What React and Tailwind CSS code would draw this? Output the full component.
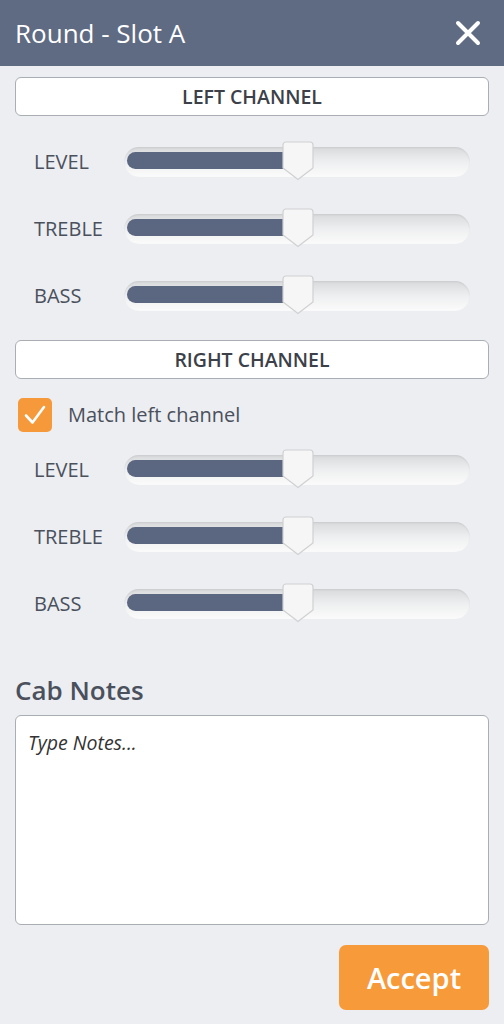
import React, { useState } from "react";

const LEFT = [
  { label: "LEVEL", value: 50 },
  { label: "TREBLE", value: 50 },
  { label: "BASS", value: 50 },
];

const Slider = ({ value }) => {
  // thumb center sits at ~173px of a 346px track when value is 50
  const pos = (value / 100) * 346;
  return (
    <div className="relative h-[30px] flex-1 rounded-full bg-gradient-to-b from-[#d9dadc] via-[#eeeff0] to-[#fbfbfb] shadow-[inset_0_1px_2px_rgba(0,0,0,0.08)]">
      <div
        className="absolute left-[3px] top-[5px] h-[17px] rounded-l-full bg-[#5b6680]"
        style={{ width: pos - 3 }}
      />
      <svg
        className="absolute top-[-6px]"
        style={{ left: pos - 15 }}
        width="32"
        height="40"
        viewBox="0 0 32 40"
      >
        <path
          d="M4 1 H28 A3 3 0 0 1 31 4 V27 L16 38.5 L1 27 V4 A3 3 0 0 1 4 1 Z"
          fill="#f6f6f6"
          stroke="#cfd0d2"
          strokeWidth="1.2"
        />
      </svg>
    </div>
  );
};

const SliderRow = ({ label, value }) => (
  <div className="flex h-[67px] items-center">
    <div className="w-[109px] pl-[19px] text-[20px] text-[#4a505c]">{label}</div>
    <div className="mr-[19px] flex flex-1">
      <Slider value={value} />
    </div>
  </div>
);

const ChannelBox = ({ children }) => (
  <div className="flex h-[39px] items-center justify-center rounded-[6px] border border-[#a9adb4] bg-white text-[19.5px] font-semibold text-[#3b4049]">
    {children}
  </div>
);

export default function App() {
  const [match, setMatch] = useState(true);

  return (
    <div className="min-h-screen w-full bg-[#eceef2]" style={{ fontFamily: '"Open Sans", sans-serif' }}>
      <div className="flex h-[66px] items-center justify-between bg-[#5f6a83] pl-[15px] pr-[23px]">
        <h1 className="text-[26px] text-white">Round - Slot A</h1>
        <svg width="26" height="26" viewBox="0 0 26 26">
          <path d="M3 3 L23 23 M23 3 L3 23" stroke="white" strokeWidth="4" strokeLinecap="round" />
        </svg>
      </div>

      <div className="px-[15px] pt-[11px]">
        <ChannelBox>LEFT CHANNEL</ChannelBox>
        <div className="mt-[12px]">
          {LEFT.map((s) => (
            <SliderRow key={s.label} {...s} />
          ))}
        </div>

        <div className="mt-[11px]">
          <ChannelBox>RIGHT CHANNEL</ChannelBox>
        </div>

        <label className="mt-[19px] flex items-center">
          <button
            onClick={() => setMatch(!match)}
            className="ml-[3px] flex h-[34px] w-[34px] items-center justify-center rounded-[5px] bg-[#f6993a]"
          >
            {match && (
              <svg width="24" height="22" viewBox="0 0 24 22">
                <path d="M3 11.5 L9.5 18.5 L21 3" fill="none" stroke="white" strokeWidth="2.6" strokeLinecap="round" strokeLinejoin="round" />
              </svg>
            )}
          </button>
          <span className="ml-[16px] text-[20px] text-[#4a505c]">Match left channel</span>
        </label>

        <div className="mt-[4px]">
          {LEFT.map((s) => (
            <SliderRow key={s.label} {...s} />
          ))}
        </div>

        <h2 className="mt-[38px] text-[26px] font-semibold leading-[30px] text-[#4a505c]">Cab Notes</h2>
        <textarea
          placeholder="Type Notes..."
          className="mt-[10px] block h-[210px] w-full resize-none rounded-[6px] border border-[#a9adb4] bg-white px-[12px] py-[12px] text-[19.5px] italic text-[#333] outline-none placeholder:text-[#333]"
        />

        <div className="mt-[20px] flex justify-end">
          <button className="h-[65px] w-[150px] rounded-[7px] bg-[#f79a3a] text-[29px] font-semibold text-white">
            Accept
          </button>
        </div>
      </div>
    </div>
  );
}
